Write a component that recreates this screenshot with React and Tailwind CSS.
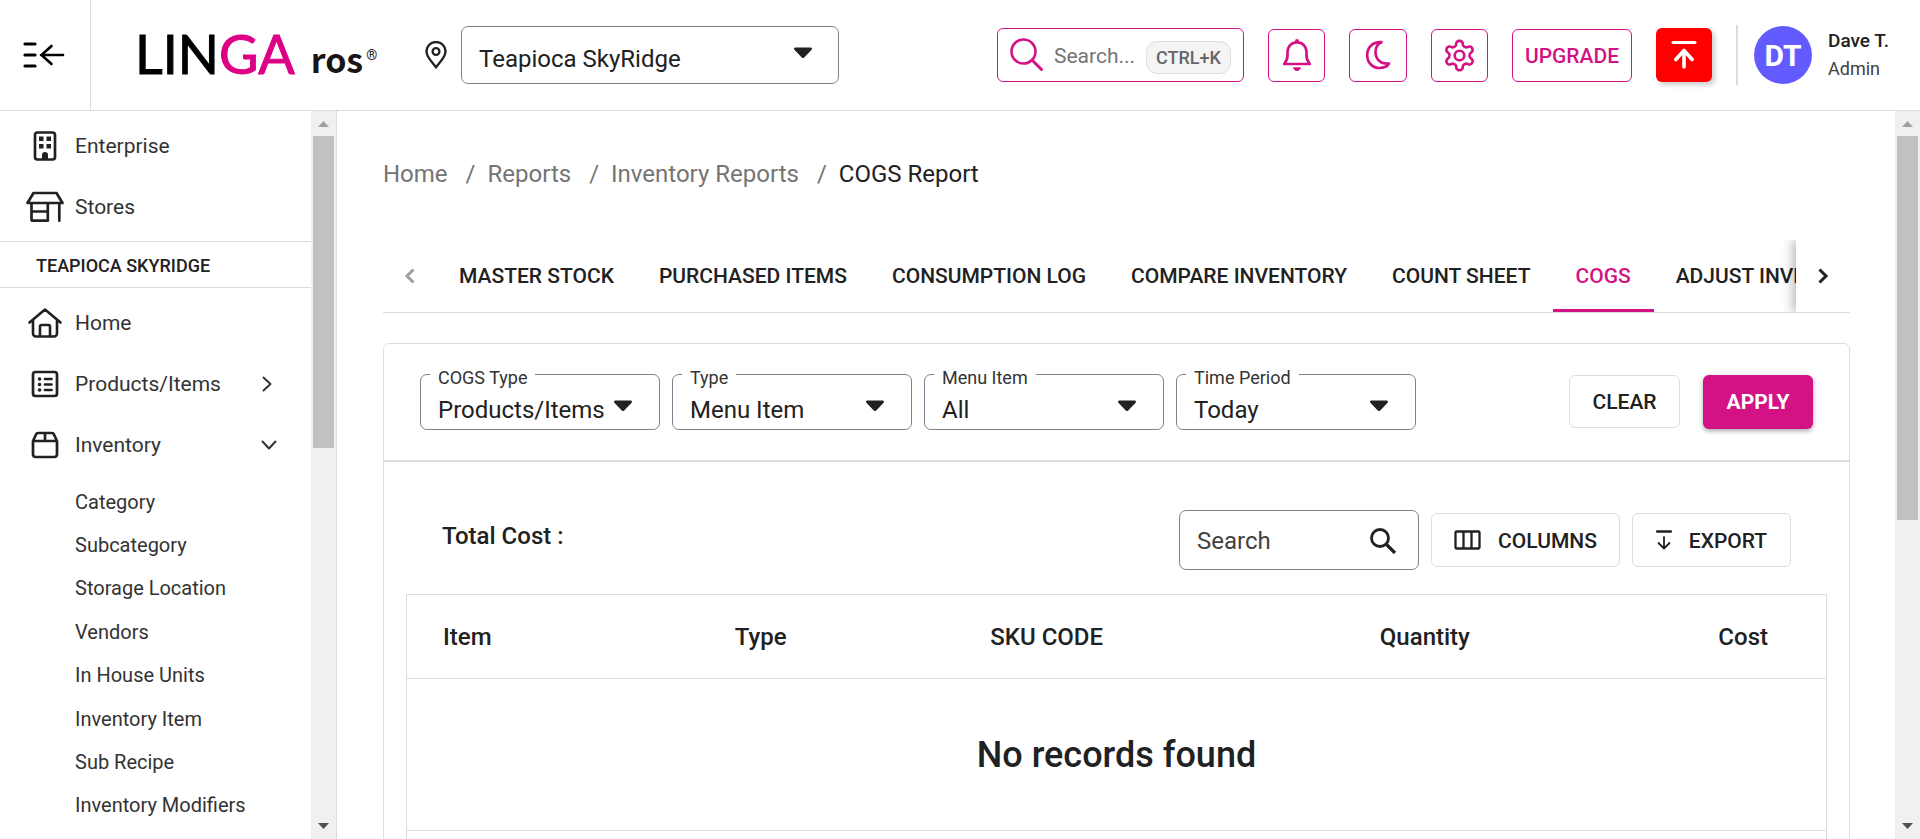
import React from "react";

const subItems = [
  "Category",
  "Subcategory",
  "Storage Location",
  "Vendors",
  "In House Units",
  "Inventory Item",
  "Sub Recipe",
  "Inventory Modifiers",
];

const tabs = [
  "MASTER STOCK",
  "PURCHASED ITEMS",
  "CONSUMPTION LOG",
  "COMPARE INVENTORY",
  "COUNT SHEET",
  "COGS",
  "ADJUST INVENTORY",
];

const filters = [
  { id: "cogs-type", label: "COGS Type", value: "Products/Items" },
  { id: "type", label: "Type", value: "Menu Item" },
  { id: "menu-item", label: "Menu Item", value: "All" },
  { id: "time-period", label: "Time Period", value: "Today" },
];

function Caret({ className }) {
  return (
    <svg
      className={`pointer-events-none absolute h-[12px] w-[20px] ${className}`}
      viewBox="0 0 20 12"
      fill="#212121"
      aria-hidden="true"
    >
      <path d="M2.500.5h15c1.600 0 2 1.300.9 2.400l-7.200 7.600c-.7.8-1.700.8-2.400 0L1.600 2.900C.5 1.800.9.5 2.500.5z" />
    </svg>
  );
}

function ScrollTrack({ thumb }) {
  return (
    <div className="flex w-[25px] shrink-0 flex-col items-center bg-[#f0f0f0]" aria-hidden="true">
      <svg className="h-[25px] w-[25px] shrink-0" viewBox="0 0 25 25" fill="#a0a0a0">
        <path d="M12.500 10 18 16H7z" />
      </svg>
      <div className="min-h-0 w-[21px] flex-1">
        <div className={`bg-[#c1c1c1] ${thumb}`} />
      </div>
      <svg className="h-[25px] w-[25px] shrink-0" viewBox="0 0 25 25" fill="#505050">
        <path d="M12.500 15 18 9H7z" />
      </svg>
    </div>
  );
}

function NavLink({ icon, label, trailing }) {
  return (
    <a href="#" className="flex h-[61px] items-center pr-[34px] text-[21px] font-normal">
      <span className="flex w-[75px] justify-center pl-[15px]">{icon}</span>
      <span className="flex-1 pt-[2px]">{label}</span>
      {trailing}
    </a>
  );
}

function StrokeIcon({ className, viewBox, children }) {
  return (
    <svg
      className={`shrink-0 ${className}`}
      viewBox={viewBox}
      fill="none"
      stroke="currentColor"
      strokeWidth="2.300"
      strokeLinecap="round"
      strokeLinejoin="round"
      aria-hidden="true"
    >
      {children}
    </svg>
  );
}

function Header() {
  return (
    <header className="flex h-[111px] shrink-0 items-stretch border-b border-[#dcdcdc]">
      <button
        type="button"
        aria-label="Collapse menu"
        className="flex w-[91px] shrink-0 items-center justify-center border-r border-[#dcdcdc] pr-[2px]"
      >
        <svg className="h-[26px] w-[42px]" viewBox="0 0 42 26" fill="none" stroke="#000" aria-hidden="true">
          <path d="M2 2h10M2 13h10M2 24h10" strokeWidth="3.200" strokeLinecap="round" />
          <path d="M40 13H18M28.500 4l-10 9 10 9" strokeWidth="2.600" strokeLinecap="round" strokeLinejoin="round" />
        </svg>
      </button>

      <a href="#" aria-label="LINGA ros" className="flex w-[287px] shrink-0 items-center pl-[44px]">
        <span className="pb-[2px] font-['Lato',sans-serif] text-[54px] leading-none text-black [-webkit-text-stroke:1px_currentColor]">
          LIN<span className="text-[#dc0085]">GA</span>
        </span>
        <span className="pl-[16px] pt-[8px] font-['Noto_Sans_CJK_SC',sans-serif] text-[34px] font-bold leading-none text-[#1a1414]">
          ros
        </span>
        <span className="pl-[3px] text-[14px] leading-none text-[#1a1414]">®</span>
      </a>

      <div className="flex flex-1 items-center justify-between">
        <div className="flex items-center gap-[14px] pl-[47px]">
          <StrokeIcon className="h-[28px] w-[22px]" viewBox="0 0 22 28">
            <path d="M11 26.500C7.500 21 1.500 16.500 1.500 10.500a9.500 9.500 0 0 1 19 0c0 6-6 10.500-9.500 16z" />
            <circle cx="11" cy="10.500" r="3.400" />
          </StrokeIcon>
          <div className="relative">
            <select
              aria-label="Store"
              className="h-[58px] w-[378px] appearance-none rounded-[7px] border border-[#7c828f] bg-white pl-[17px] pr-[48px] pt-[8px] text-[24px] text-[#212121]"
            >
              <option>Teapioca SkyRidge</option>
            </select>
            <Caret className="right-[26px] top-[21px]" />
          </div>
        </div>

        <div className="flex items-center gap-[24px] pr-[31px] text-[#d31286]">
          <label className="flex h-[54px] w-[247px] items-center rounded-[6px] border border-current pl-[12px] pr-[12px]">
            <StrokeIcon className="h-[34px] w-[34px]" viewBox="0 0 34 34">
              <circle cx="13.500" cy="13.500" r="12" strokeWidth="2.600" />
              <path d="m22 22 9.500 9.500" strokeWidth="3" />
            </StrokeIcon>
            <input
              type="text"
              aria-label="Search"
              placeholder="Search..."
              className="min-w-0 flex-1 pl-[10px] pt-[3px] text-[21px] outline-none placeholder:text-[#757575]"
            />
            <kbd className="mt-[4px] flex h-[33px] w-[85px] shrink-0 items-center justify-center rounded-[11px] border border-[#dedede] bg-[#f4f4f4] font-[Roboto,sans-serif] text-[18px] font-medium text-[#666]">
              CTRL+K
            </kbd>
          </label>
          <button
            type="button"
            aria-label="Notifications"
            className="flex h-[53px] w-[57px] items-center justify-center rounded-[6px] border border-current"
          >
            <svg className="h-[32px] w-[30px]" viewBox="0 0 30 32" fill="none" aria-hidden="true">
              <path
                d="M2.200 25h25.600c-2-2.400-3.300-5-3.300-8.500v-3C24.500 7.500 20.500 3.300 15 3.300S5.500 7.500 5.500 13.500v3c0 3.500-1.300 6.100-3.300 8.500z"
                stroke="currentColor"
                strokeWidth="2.700"
                strokeLinejoin="round"
              />
              <path d="M13 3.500V2a2 2 0 0 1 4 0v1.500zM11 28.200h8c-.5 2.300-2 3.800-4 3.800s-3.500-1.500-4-3.800z" fill="currentColor" />
            </svg>
          </button>
          <button
            type="button"
            aria-label="Dark mode"
            className="flex h-[53px] w-[58px] items-center justify-center rounded-[6px] border border-current"
          >
            <svg className="h-[30px] w-[26px]" viewBox="0 0 26 30" fill="none" aria-hidden="true">
              <path
                d="M16.500 2.200C8 1.500 2.200 7.500 2.200 15c0 8 5.500 13 12.300 13 4.500 0 8-2 9.500-4.500-8.500.8-13.500-4.500-13.500-11.500 0-4.500 2.500-8.300 6-9.800z"
                stroke="currentColor"
                strokeWidth="2.700"
                strokeLinejoin="round"
              />
            </svg>
          </button>
          <button
            type="button"
            aria-label="Settings"
            className="flex h-[53px] w-[57px] items-center justify-center rounded-[6px] border border-current"
          >
            <svg
              className="h-[35px] w-[35px]"
              viewBox="0 0 24 24"
              fill="none"
              stroke="currentColor"
              strokeWidth="1.800"
              strokeLinecap="round"
              strokeLinejoin="round"
              aria-hidden="true"
            >
              <path d="M12.220 2h-.44a2 2 0 0 0-2 2v.18a2 2 0 0 1-1 1.730l-.43.25a2 2 0 0 1-2 0l-.15-.08a2 2 0 0 0-2.730.73l-.22.38a2 2 0 0 0 .73 2.730l.15.1a2 2 0 0 1 1 1.720v.51a2 2 0 0 1-1 1.740l-.15.09a2 2 0 0 0-.73 2.730l.22.38a2 2 0 0 0 2.730.73l.15-.08a2 2 0 0 1 2 0l.43.25a2 2 0 0 1 1 1.730V20a2 2 0 0 0 2 2h.44a2 2 0 0 0 2-2v-.18a2 2 0 0 1 1-1.730l.43-.25a2 2 0 0 1 2 0l.15.08a2 2 0 0 0 2.730-.73l.22-.39a2 2 0 0 0-.73-2.730l-.15-.08a2 2 0 0 1-1-1.740v-.5a2 2 0 0 1 1-1.740l.15-.09a2 2 0 0 0 .73-2.730l-.22-.38a2 2 0 0 0-2.730-.73l-.15.08a2 2 0 0 1-2 0l-.43-.25a2 2 0 0 1-1-1.730V4a2 2 0 0 0-2-2z" />
              <circle cx="12" cy="12" r="3.300" />
            </svg>
          </button>
          <button
            type="button"
            className="h-[53px] w-[120px] rounded-[6px] border border-current pt-[3px] text-[21px] font-medium"
          >
            UPGRADE
          </button>
          <button
            type="button"
            aria-label="Upload"
            className="flex h-[54px] w-[56px] items-center justify-center rounded-[6px] bg-[#ff0000] shadow-[3px_3px_5px_rgba(0,0,0,0.2)]"
          >
            <svg
              className="h-[30px] w-[26px]"
              viewBox="0 0 26 30"
              fill="none"
              stroke="#fff"
              strokeLinecap="round"
              strokeLinejoin="round"
              aria-hidden="true"
            >
              <path d="M2 2.500h22" strokeWidth="3" />
              <path d="M13 27V11M4.800 19.500l8.200-9 8.200 9" strokeWidth="3.600" />
            </svg>
          </button>
          <div className="flex h-[60px] items-center border-l-2 border-[#dcdcdc] pl-[16px]">
            <div className="flex h-[58px] w-[58px] items-center justify-center rounded-full bg-[#635bff] text-[30px] font-bold text-white">
              DT
            </div>
            <div className="pl-[16px] leading-[28px]">
              <div className="text-[19px] font-medium text-[#212121]">Dave T.</div>
              <div className="text-[18px] text-[#424242]">Admin</div>
            </div>
          </div>
        </div>
      </div>
    </header>
  );
}

function Sidebar() {
  return (
    <aside className="flex w-[337px] shrink-0 border-r border-[#dcdcdc] text-[#333]">
      <nav className="min-w-0 flex-1 overflow-y-auto [scrollbar-width:none]">
        <div className="py-[4px]">
          <NavLink
            label="Enterprise"
            icon={
              <svg className="h-[30px] w-[24px]" viewBox="0 0 24 30" aria-hidden="true">
                <rect x="2" y="1.500" width="20" height="27" rx="2.500" fill="none" stroke="#212121" strokeWidth="2.700" />
                <path d="M6 5.500h4.500V10H6zM13.500 5.500H18V10h-4.500zM6 13h4.500v4.500H6zM13.500 13H18v4.500h-4.500zM9 29v-5a3 3 0 0 1 6 0v5z" fill="#212121" />
              </svg>
            }
          />
          <NavLink
            label="Stores"
            icon={
              <svg className="h-[32px] w-[38px]" viewBox="0 0 38 32" fill="none" stroke="#212121" strokeWidth="2.700" strokeLinecap="round" strokeLinejoin="round" aria-hidden="true">
                <path d="M7.500 2h23l6 10h-35zM5.500 12v16.500c0 .8.400 1.200 1.200 1.200h15.100V12M5.500 20.500h16.300M33.300 12v17.700" />
              </svg>
            }
          />
        </div>
        <div className="flex h-[47px] items-center border-y border-[#dcdcdc] pl-[36px] pt-[2px] text-[18px] font-medium text-[#212121]">
          TEAPIOCA SKYRIDGE
        </div>
        <div className="pt-[4px]">
          <NavLink
            label="Home"
            icon={
              <svg className="h-[30px] w-[34px]" viewBox="0 0 34 30" fill="none" stroke="#212121" strokeWidth="2.600" strokeLinecap="round" strokeLinejoin="round" aria-hidden="true">
                <path d="M1.500 14.500 17 1.500l15.500 13M5 12v13.500A3 3 0 0 0 8 28.500h18a3 3 0 0 0 3-3V12M12 28V18.500c0-1 .5-1.500 1.500-1.500h7c1 0 1.500.5 1.500 1.500V28" />
              </svg>
            }
          />
          <NavLink
            label="Products/Items"
            icon={
              <svg className="h-[28px] w-[28px]" viewBox="0 0 28 28" fill="none" stroke="#212121" strokeWidth="2.700" strokeLinecap="round" aria-hidden="true">
                <rect x="2" y="2" width="24" height="24" rx="2.500" />
                <path d="M14 9h6.500M14 14.500h6.500M14 20h6.500" />
                <path d="M8.500 9h.1M8.500 14.500h.1M8.500 20h.1" strokeWidth="3.600" />
              </svg>
            }
            trailing={
              <StrokeIcon className="mr-[5px] h-[16px] w-[10px]" viewBox="0 0 10 16">
                <path d="m1.500 1.500 7 6.500-7 6.500" strokeWidth="2" />
              </StrokeIcon>
            }
          />
          <NavLink
            label="Inventory"
            icon={
              <svg className="h-[28px] w-[28px]" viewBox="0 0 28 28" fill="none" stroke="#212121" strokeWidth="2.700" strokeLinejoin="round" aria-hidden="true">
                <path d="M2 10v13.500A2.500 2.500 0 0 0 4.500 26h19a2.500 2.500 0 0 0 2.500-2.500V10zM2 10l3-6.500c.4-1 1.200-1.500 2.200-1.500h13.600c1 0 1.800.5 2.200 1.500L26 10M14 2v8" />
              </svg>
            }
            trailing={
              <StrokeIcon className="h-[10px] w-[16px]" viewBox="0 0 16 10">
                <path d="m1.500 1.500 6.500 7 6.500-7" strokeWidth="2" />
              </StrokeIcon>
            }
          />
        </div>
        <ul className="grid h-[352px] grid-rows-8 pt-[5px] text-[20px]">
          {subItems.map((item) => (
            <li key={item} className="flex items-center pl-[75px]">
              <a href="#">{item}</a>
            </li>
          ))}
        </ul>
      </nav>
      <ScrollTrack thumb="h-[46%]" />
    </aside>
  );
}

function Breadcrumbs() {
  return (
    <nav aria-label="Breadcrumb" className="flex items-center text-[24px] leading-[32px] text-[#757575]">
      <a href="#">Home</a>
      <span className="pl-[18px] pr-[12px]">/</span>
      <a href="#">Reports</a>
      <span className="pl-[18px] pr-[12px]">/</span>
      <a href="#">Inventory Reports</a>
      <span className="pl-[18px] pr-[12px]">/</span>
      <span className="text-[#212121]">COGS Report</span>
    </nav>
  );
}

function TabBar() {
  return (
    <div className="flex h-[73px] border-b border-[#dcdcdc]">
      <button type="button" aria-label="Previous tabs" className="flex w-[54px] shrink-0 items-center justify-center text-[#9e9e9e]">
        <StrokeIcon className="h-[18px] w-[12px]" viewBox="0 0 12 18">
          <path d="M9.500 2.500 3 9l6.500 6.500" strokeWidth="3" strokeLinecap="butt" strokeLinejoin="miter" />
        </StrokeIcon>
      </button>
      <div role="tablist" className="flex min-w-0 flex-1 overflow-hidden">
        {tabs.map((tab) => (
          <button
            key={tab}
            type="button"
            role="tab"
            aria-selected={tab === "COGS"}
            className={`shrink-0 whitespace-nowrap border-b-[3px] pl-[22px] pr-[23px] pt-[4px] text-[21px] font-medium ${
              tab === "COGS" ? "border-[#d31286] text-[#d31286]" : "border-transparent text-[#212121]"
            }`}
          >
            {tab}
          </button>
        ))}
      </div>
      <button
        type="button"
        aria-label="Next tabs"
        className="z-10 flex w-[54px] shrink-0 items-center justify-center bg-white shadow-[-4px_0_10px_rgba(0,0,0,0.25)] [clip-path:inset(0_0_0_-20px)]"
      >
        <StrokeIcon className="h-[18px] w-[12px]" viewBox="0 0 12 18">
          <path d="M2.500 2.500 9 9l-6.500 6.500" strokeWidth="3" strokeLinecap="butt" strokeLinejoin="miter" />
        </StrokeIcon>
      </button>
    </div>
  );
}

function Filters() {
  return (
    <div className="flex items-start justify-between border-b-2 border-[#dcdcdc] px-[36px] pb-[30px] pt-[30px]">
      <div className="flex gap-[12px]">
        {filters.map((f) => (
          <div key={f.id} className="relative">
            <select
              id={f.id}
              className="h-[56px] w-[240px] appearance-none rounded-[7px] border border-[#7c828f] bg-white pl-[17px] pr-[48px] pt-[15px] text-[24px] text-[#212121]"
            >
              <option>{f.value}</option>
            </select>
            <label htmlFor={f.id} className="absolute left-[10px] top-[-6px] bg-white px-[8px] text-[18px] leading-[20px] text-[#333]">
              {f.label}
            </label>
            <Caret className="right-[27px] top-[26px]" />
          </div>
        ))}
      </div>
      <div className="flex items-start gap-[23px] pt-px">
        <button type="button" className="h-[53px] w-[111px] rounded-[6px] border border-[#dedede] pt-[2px] text-[21px] font-medium">
          CLEAR
        </button>
        <button
          type="button"
          className="h-[54px] w-[110px] rounded-[6px] bg-[#d31286] pt-[2px] text-[21px] font-bold text-white shadow-[0_2px_5px_rgba(0,0,0,0.35)]"
        >
          APPLY
        </button>
      </div>
    </div>
  );
}

function Toolbar() {
  return (
    <div className="flex items-center justify-between pl-[58px] pr-[58px] pt-[48px]">
      <div className="pb-[8px] text-[24px] font-medium">Total Cost :</div>
      <div className="flex items-center gap-[12px]">
        <label className="flex h-[60px] w-[240px] items-center rounded-[7px] border border-[#7c828f] pl-[17px] pr-[20px]">
          <input
            type="text"
            aria-label="Search items"
            placeholder="Search"
            className="min-w-0 flex-1 pt-[2px] text-[24px] outline-none placeholder:text-[#424242]"
          />
          <StrokeIcon className="h-[28px] w-[30px]" viewBox="0 0 30 28">
            <circle cx="12" cy="12" r="8.500" strokeWidth="2.800" />
            <path d="m18.500 18.500 8.500 8.500" strokeWidth="3.200" strokeLinecap="butt" />
          </StrokeIcon>
        </label>
        <button
          type="button"
          className="flex h-[54px] w-[189px] items-center justify-center gap-[17px] rounded-[6px] border border-[#dedede] text-[21px] font-medium"
        >
          <StrokeIcon className="h-[20px] w-[27px]" viewBox="0 0 27 20">
            <path d="M2.500 1.500h22a1 1 0 0 1 1 1v15a1 1 0 0 1-1 1h-22a1 1 0 0 1-1-1v-15a1 1 0 0 1 1-1zM9.500 1.500v17M17.500 1.500v17" />
          </StrokeIcon>
          <span className="pt-[3px]">COLUMNS</span>
        </button>
        <button
          type="button"
          className="flex h-[54px] w-[159px] items-center justify-center gap-[17px] rounded-[6px] border border-[#dedede] text-[21px] font-medium"
        >
          <StrokeIcon className="h-[20px] w-[16px]" viewBox="0 0 16 20">
            <path d="M1 1.500h14" />
            <path d="M8 7v11M2.500 13 8 18.500l5.500-5.500" strokeWidth="1.800" />
          </StrokeIcon>
          <span className="pt-[3px]">EXPORT</span>
        </button>
      </div>
    </div>
  );
}

function ItemsTable() {
  return (
    <div className="px-[22px] pt-[24px]">
      <table className="w-full table-fixed border-collapse border border-[#dcdcdc] text-[24px]">
        <colgroup>
          <col className="w-[21%]" />
          <col className="w-[18%]" />
          <col className="w-[21%]" />
          <col className="w-[17%]" />
          <col />
        </colgroup>
        <thead>
          <tr className="h-[84px] border-b border-[#dcdcdc]">
            <th className="pl-[36px] text-left font-medium">Item</th>
            <th className="pl-[30px] text-left font-medium">Type</th>
            <th className="pl-[30px] text-left font-medium">SKU CODE</th>
            <th className="pr-[30px] text-right font-medium">Quantity</th>
            <th className="pr-[58px] text-right font-medium">Cost</th>
          </tr>
        </thead>
        <tbody>
          <tr className="h-[152px] border-b border-[#dcdcdc]">
            <td colSpan={5} className="text-center text-[36px] font-medium">
              No records found
            </td>
          </tr>
          <tr className="h-[84px]">
            <td colSpan={5} />
          </tr>
        </tbody>
      </table>
    </div>
  );
}

export default function App() {
  return (
    <div className="flex h-screen flex-col overflow-hidden bg-white font-[Roboto,sans-serif] text-[#212121]">
      <Header />
      <div className="flex min-h-0 flex-1">
        <Sidebar />
        <main className="min-w-0 flex-1 overflow-y-auto pl-[46px] pr-[45px] pt-[47px] [scrollbar-width:none]">
          <Breadcrumbs />
          <div className="pt-[50px]">
            <TabBar />
          </div>
          <section className="mt-[30px] rounded-[6px] border border-[#dedede] pb-[40px]">
            <Filters />
            <Toolbar />
            <ItemsTable />
          </section>
        </main>
        <ScrollTrack thumb="h-[384px]" />
      </div>
    </div>
  );
}
